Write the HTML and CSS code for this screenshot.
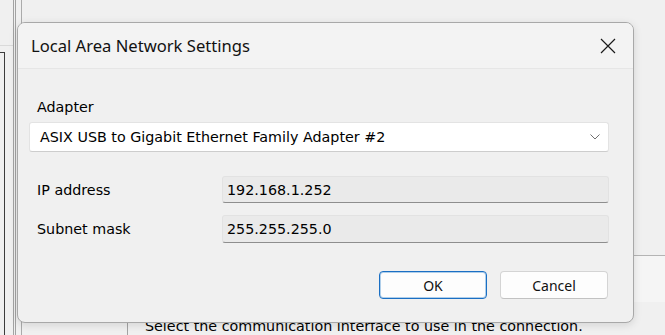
FILE: index.html
```html
<!DOCTYPE html>
<html lang="en">
<head>
    <meta charset="UTF-8">
    <meta name="viewport" content="width=device-width, initial-scale=1.0">
    <title>Local Area Network Settings</title>
    <link rel="stylesheet" href="styles.css">
</head>
<body>
    <!-- window behind the dialog -->
    <div class="app">
        <div class="side">
            <div class="side-rule"></div>
            <div class="tree"></div>
        </div>
        <div class="rail"></div>
        <div class="main">
            <div class="main-top"></div>
            <div class="band"></div>
            <div class="lower">
                <div class="nav"></div>
                <p class="hint">Select the communication interface to use in the connection.</p>
            </div>
        </div>
    </div>

    <div class="dialog">
        <div class="titlebar">
            <span class="title">Local Area Network Settings</span>
            <svg class="close" width="16" height="16" viewBox="0 0 16 16">
                <path d="M1 1 L15 15 M15 1 L1 15" stroke="#1a1a1a" stroke-width="1.2" fill="none"/>
            </svg>
        </div>

        <div class="content">
            <div class="field-label">Adapter</div>
            <div class="combo">
                <span>ASIX USB to Gigabit Ethernet Family Adapter #2</span>
                <svg width="10" height="6" viewBox="0 0 10 6">
                    <path d="M0.5 0.5 L5 5 L9.5 0.5" stroke="#707070" stroke-width="1" fill="none"/>
                </svg>
            </div>

            <div class="rows">
                <div class="row">
                    <div class="row-label">IP address</div>
                    <div class="field">192.168.1.252</div>
                </div>
                <div class="row row-second">
                    <div class="row-label">Subnet mask</div>
                    <div class="field field-tall">255.255.255.0</div>
                </div>
            </div>

            <div class="actions">
                <button class="btn btn-primary">OK</button>
                <button class="btn">Cancel</button>
            </div>
        </div>
    </div>
</body>
</html>
```

FILE: styles.css
```css
body {
    margin: 0;
    width: 665px;
    height: 335px;
    overflow: hidden;
    background-color: #f0f0f0;
    font-family: "DejaVu Sans", Verdana, sans-serif;
    font-size: 14.3px;
    color: #000;
}

/* background window */
.app {
    display: flex;
    height: 335px;
}

.side {
    width: 13px;
    padding-top: 45px;
}

.side-rule {
    border-top: 1px solid #dadada;
}

.tree {
    margin-top: 6px;
    width: 4px;
    height: 290px;
    border-top: 1px solid #3c3c3c;
    border-right: 1px solid #3c3c3c;
}

.rail {
    width: 1px;
    border-left: 1px solid #a3a3a3;
    border-right: 1px solid #a3a3a3;
}

.main {
    flex-grow: 1;
    margin-left: 5px;
    display: flex;
    flex-direction: column;
    border-left: 1px solid #ababab;
}

.main-top {
    height: 256px;
    border-bottom: 1px solid #b4b4b4;
}

.band {
    height: 46px;
    background-color: #f5f5f5;
}

.lower {
    flex-grow: 1;
    display: flex;
}

.nav {
    width: 105px;
    border-right: 1px solid #a3a3a3;
}

.hint {
    margin: 16px 0 0 17px;
    line-height: 17px;
    white-space: nowrap;
}

/* dialog */
.dialog {
    position: absolute;
    left: 17px;
    top: 22px;
    width: 617px;
    height: 301px;
    box-sizing: border-box;
    border: 1px solid #a8a8a8;
    border-radius: 8px;
    background-color: #f0f0f0;
    box-shadow: 0 2px 8px rgba(0, 0, 0, 0.12);
    overflow: hidden;
    display: flex;
    flex-direction: column;
}

.titlebar {
    height: 45px;
    display: flex;
    align-items: center;
    justify-content: space-between;
    padding: 0 17px 0 13px;
    background-color: #f3f3f3;
    border-bottom: 1px solid #e6e6e6;
}

.title {
    font-family: "Noto Sans", "Open Sans", sans-serif;
    font-size: 16.6px;
    color: #111;
}

.close {
    display: block;
}

.content {
    padding: 30px 24px 0 11px;
}

.field-label {
    margin-left: 8px;
    line-height: 16px;
}

.combo {
    margin-top: 7px;
    height: 30px;
    box-sizing: border-box;
    display: flex;
    align-items: center;
    justify-content: space-between;
    padding: 0 8px 0 10px;
    background-color: #fff;
    border: 1px solid #e3e3e3;
    border-bottom-color: #cdcdcd;
    border-radius: 3px;
}

.rows {
    margin-top: 24px;
}

.row {
    display: flex;
    align-items: center;
}

.row-second {
    margin-top: 12px;
}

.row-label {
    width: 193px;
    padding-left: 8px;
    box-sizing: border-box;
}

.field {
    flex-grow: 1;
    height: 27px;
    box-sizing: border-box;
    display: flex;
    align-items: center;
    padding-left: 4px;
    background-color: #eaeaea;
    border: 1px solid #e2e2e2;
    border-bottom: 1px solid #8e8e8e;
    border-radius: 3px;
}

.field-tall {
    height: 28px;
}

.actions {
    margin-top: 28px;
    display: flex;
    justify-content: flex-end;
    gap: 13px;
    padding-right: 1px;
}

.btn {
    width: 108px;
    height: 28px;
    box-sizing: border-box;
    font-family: "Noto Sans", "Open Sans", sans-serif;
    font-size: 14px;
    color: #111;
    background-color: #fdfdfd;
    border: 1px solid #d4d4d4;
    border-bottom-color: #c2c2c2;
    border-radius: 4px;
    padding: 0;
}

.btn-primary {
    border: 1px solid #1a6fc4;
    box-shadow: inset 0 0 0 1px rgba(0, 103, 192, 0.3);
}
```
